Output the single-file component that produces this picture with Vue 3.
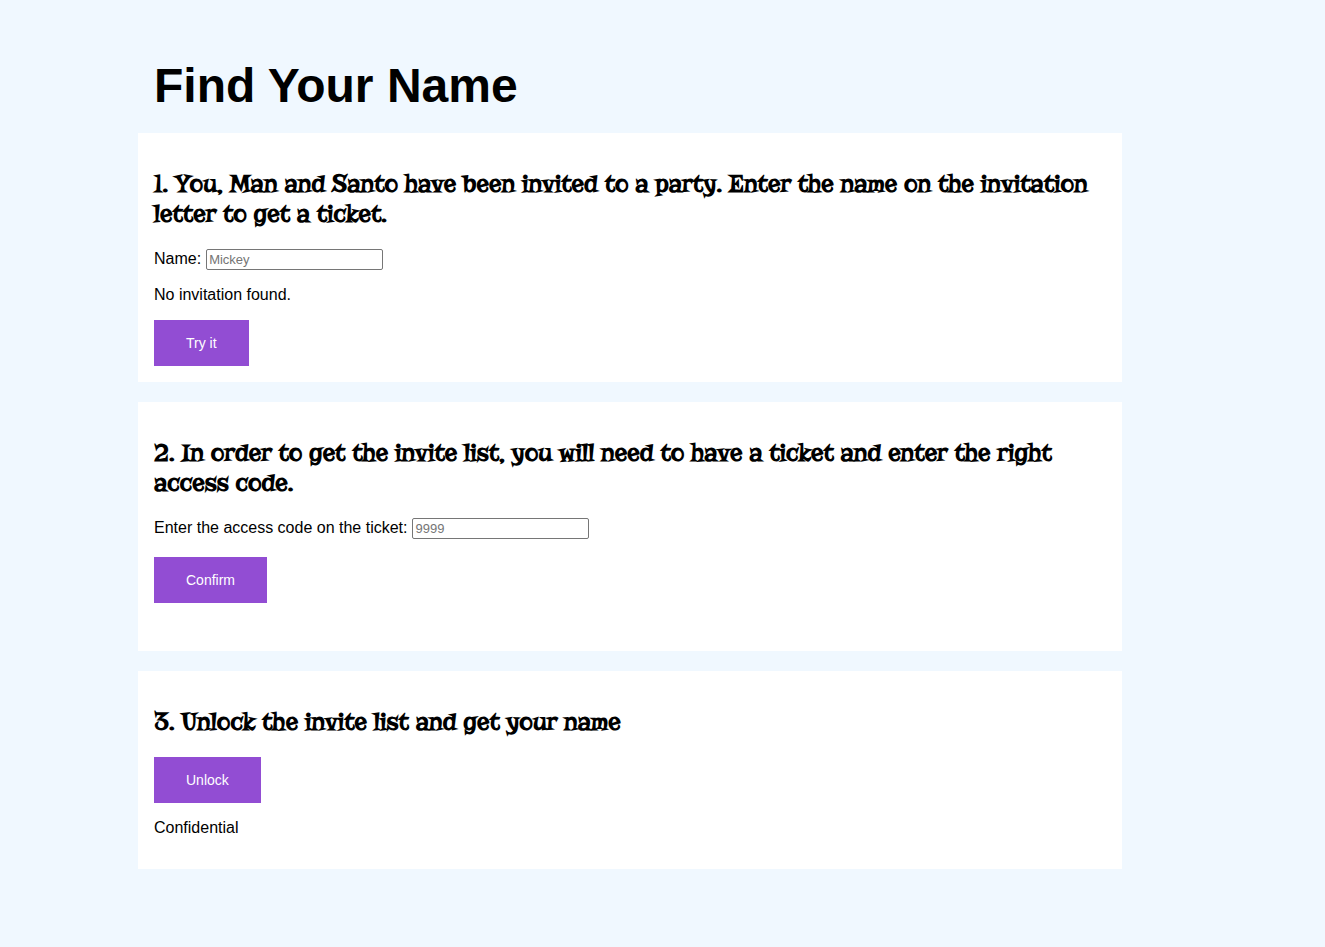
<script setup>
import { ref } from 'vue'

const guestName = ref('')
const accessCode = ref('')
</script>

<template>
  <main class="page">
    <h1>Find Your Name</h1>

    <form class="card" @submit.prevent>
      <h2>1. You, Man and Santo have been invited to a party. Enter the name on the invitation letter to get a ticket.</h2>
      <div class="field">
        <label for="guest">Name:</label>
        <input id="guest" v-model="guestName" type="text" placeholder="Mickey">
      </div>
      <p>No invitation found.</p>
      <button type="submit">Try it</button>
    </form>

    <form class="card with-result" @submit.prevent>
      <h2>2. In order to get the invite list, you will need to have a ticket and enter the right access code.</h2>
      <div class="field spaced">
        <label for="code">Enter the access code on the ticket:</label>
        <input id="code" v-model="accessCode" type="text" placeholder="9999">
      </div>
      <button type="submit">Confirm</button>
    </form>

    <section class="card">
      <h2>3. Unlock the invite list and get your name</h2>
      <button type="button">Unlock</button>
      <p>Confidential</p>
    </section>
  </main>
</template>

<style>
body {
  margin: 0;
  background: #f0f8ff;
}
</style>

<style scoped>
.page {
  padding: 58px 203px 60px 138px;
  font: 16px "Liberation Sans", Arial, sans-serif;
  color: #000;
}

h1 {
  margin: 0 16px 20px;
  font-size: 48px;
  line-height: 55px;
}

.card {
  display: flow-root;
  margin-bottom: 20px;
  padding: 0 16px 16px;
  background: #fff;
}

.with-result {
  padding-bottom: 48px;
}

h2 {
  margin: 36px 0 20px;
  font: bold 26px/30px "Risque", "Liberation Serif", serif;
}

.field {
  display: flex;
  gap: 5px;
  height: 21px;
  margin-bottom: 16px;
  line-height: 20px;
}

.spaced {
  margin-bottom: 18px;
}

input {
  box-sizing: border-box;
  width: 177px;
  height: 21px;
  padding: 1px 2px;
  border: 1px solid #767676;
  border-radius: 2px;
  background: #fff;
  font: 13px "Liberation Sans", Arial, sans-serif;
}

input::placeholder {
  color: #757575;
}

p {
  margin: 16px 0;
  line-height: 18px;
}

button {
  display: block;
  padding: 15px 32px;
  border: 0;
  background: #924dd3;
  color: #fff;
  font: 14px/16px "Liberation Sans", Arial, sans-serif;
  cursor: pointer;
}
</style>
